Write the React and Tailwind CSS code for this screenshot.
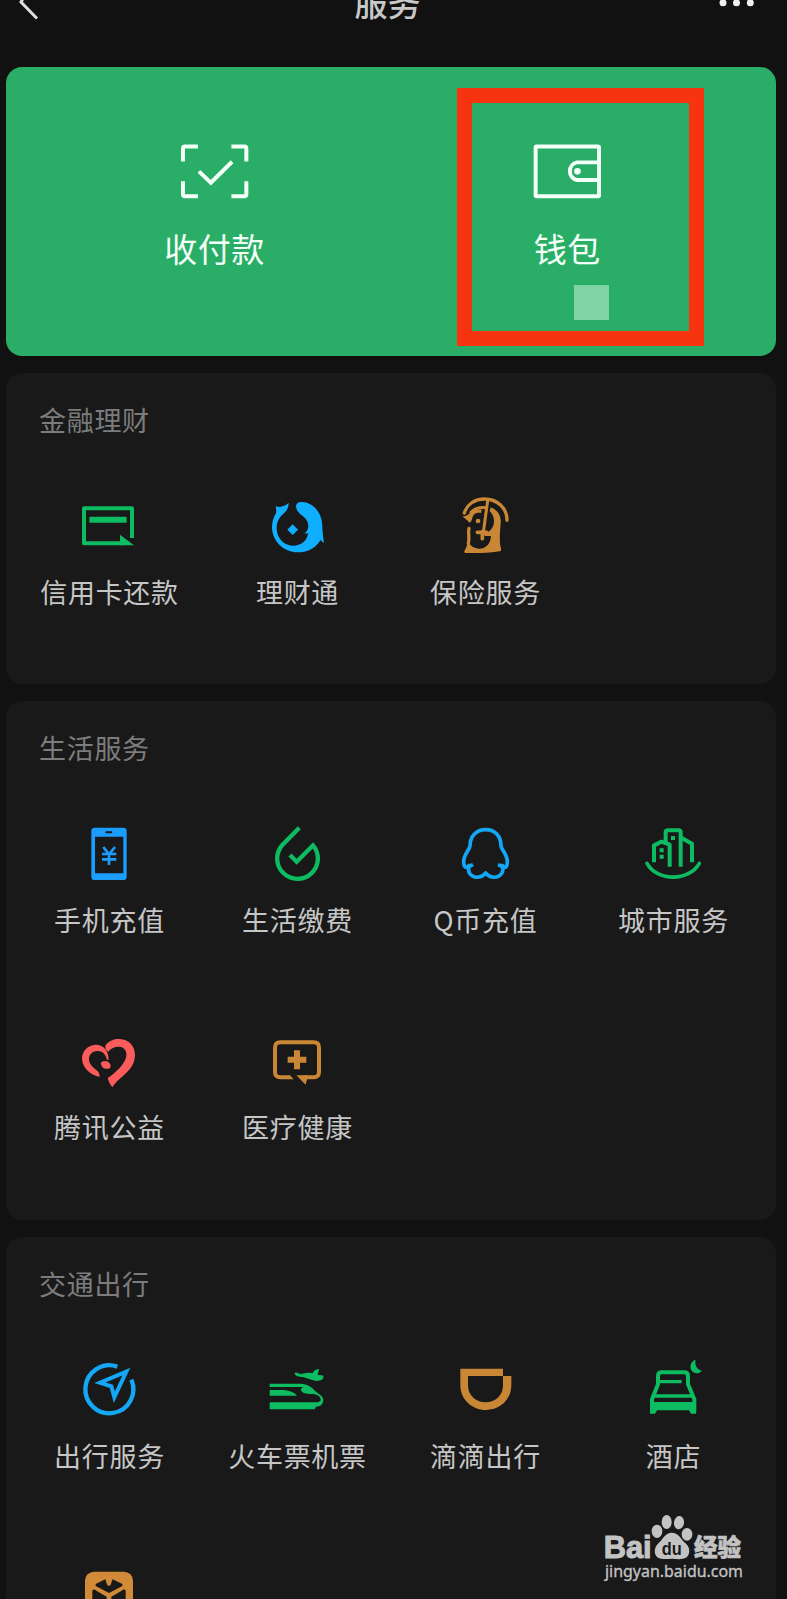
import clsx from "clsx";

const GREEN = "#0dbc60";
const BLUE = "#14a7f5";
const ORANGE = "#c98634";

function CardIcon() {
    return (
        <svg viewBox="237 408 180 180" className="size-[60px]" fill="none" stroke={GREEN} strokeWidth="12">
            <path d="M396 534V445H252V550H372" strokeLinejoin="round" />
            <path d="M268 479H380" strokeWidth="18" />
            <path d="M360 524L402 556H360Z" fill={GREEN} stroke="none" />
        </svg>
    );
}

function FishIcon() {
    return (
        <svg viewBox="81 48 180 180" className="size-[60px]" fill="#10aeff">
            <path d="M107 78C114 82 120 82 127 79C135 77 141 73 146 68C146 80 142 91 132 100C117 112 109 128 110 148C112 176 133 197 158 197C184 197 201 182 205 158C202 161 198 162 194 160C202 154 205 145 205 137C204 122 196 114 184 105C175 98 168 88 168 79C168 70 175 66 185 66C219 66 247 99 247 139C247 154 249 169 252 188C248 186 244 183 242 179C229 202 204 217 174 217C130 217 96 183 96 141C96 124 102 109 108 100C109 93 109 85 107 78Z" />
            <path d="M158 133L174 149L158 165L142 149Z" />
        </svg>
    );
}

function InsuranceIcon() {
    return (
        <svg viewBox="645 48 180 180" className="size-[60px]" fill="none" stroke={ORANGE} strokeWidth="10" strokeLinecap="round">
            <path d="M673 99C681 73 704 57 733 57C772 57 801 84 801 121" />
            <path d="M693 97C704 85 720 81 738 83" strokeWidth="9" />
            <path d="M743 62L731 150" strokeWidth="9" />
            <path d="M712 157H740M727 155V176" strokeWidth="11" />
            <path d="M687 145C683 161 690 174 685 190" strokeWidth="10" />
            <path d="M667 108C676 111 682 106 690 99C696 91 707 87 725 89L723 99C708 96 699 103 697 115C695 122 693 127 688 128C682 118 674 117 667 108Z" fill={ORANGE} stroke="none" />
            <circle cx="714" cy="123" r="7" fill={ORANGE} stroke="none" />
            <path d="M752 82C774 90 784 108 782 130C780 154 777 187 783 205L783 212C766 219 705 219 674 219L673 212C678 207 681 198 683 184C691 198 702 206 718 206C739 206 752 190 753 168H733V161C751 156 762 142 762 123C762 109 755 99 749 94Z" fill={ORANGE} stroke="none" />
        </svg>
    );
}

function PhoneIcon() {
    return (
        <svg viewBox="117 72 180 180" className="size-[60px]" fill="none" stroke="#1b9cff">
            <path fillRule="evenodd" d="M164 83H250Q260 83 260 93V230Q260 240 250 240H164Q154 240 154 230V93Q154 83 164 83ZM165 110V220H250V110Z" fill="#1b9cff" stroke="none" />
            <path d="M199 97H214" stroke="#191919" strokeWidth="6" strokeLinecap="round" />
            <path d="M190 141L207 163L225 141M207 163V195M186 162H229M186 178H229" strokeWidth="8" />
        </svg>
    );
}

function DropIcon() {
    return (
        <svg viewBox="681 72 180 180" className="size-[60px]" fill="none" stroke={GREEN} strokeWidth="13">
            <path d="M778 83L727 135A61 61 0 1 0 819 136L770 185L750 165" />
        </svg>
    );
}

function PenguinIcon() {
    return (
        <svg viewBox="105 72 180 180" className="size-[60px]" fill="none" stroke={BLUE} strokeWidth="11" strokeLinejoin="round">
            <path d="M197 89C168 89 150 109 150 138C148 151 132 162 131 184C131 202 138 207 148 196C145 203 144 211 148 219C159 236 183 236 197 219C211 236 235 236 246 219C250 211 249 203 246 196C256 207 262 202 262 184C261 162 245 151 243 138C243 109 226 89 197 89Z" />
            <path d="M147 200L159 194M247 200L234 194" />
        </svg>
    );
}

function CityIcon() {
    return (
        <svg viewBox="669 72 180 180" className="size-[60px]" fill="none" stroke={GREEN} strokeWidth="12" strokeLinejoin="round">
            <path d="M702 187V136L725 125L749 134V200" />
            <path d="M737 130V97Q737 91 744 91H775Q782 91 782 97V200" />
            <path d="M784 113L816 131V187" />
            <path d="M719 151H731M719 170H731M753 114H765" />
            <path d="M681 190C711 245 807 245 838 190" strokeLinecap="round" strokeWidth="11" />
        </svg>
    );
}

function HeartIcon() {
    return (
        <svg viewBox="237 33 180 180" className="size-[60px]" fill="#fa5b5b">
            <path d="M325 95C317 92 314 84 317 75C329 61 344 56 359 57C388 58 406 80 405 106C404 132 391 149 369 168C354 181 344 190 337 202C331 194 326 186 323 174C343 161 376 133 379 108C381 90 370 80 356 80C342 80 331 86 325 95Z" />
            <path d="M326 120C326 90 308 73 286 74C262 76 246 93 246 116C247 145 271 163 299 171C298 160 296 156 290 151C277 142 266 131 267 115C268 102 278 94 291 93C307 92 316 102 321 119Z" />
            <path d="M302 130C306 123 316 121 324 125C332 130 334 138 330 144C324 148 314 147 309 143C305 140 304 134 302 130Z" />
        </svg>
    );
}

function MedicalIcon() {
    return (
        <svg viewBox="801 33 180 180" className="size-[60px]" fill="none" stroke={ORANGE} strokeWidth="12">
            <path d="M866 172H841Q825 172 825 156V83Q825 67 841 67H941Q957 67 957 83V156Q957 172 941 172H908" />
            <path d="M891 91V148M863 119H919" strokeWidth="18" />
            <path d="M889 166H924L917 194Z M864 166H870L881 178H864Z" fill={ORANGE} stroke="none" />
        </svg>
    );
}

function CompassIcon() {
    return (
        <svg viewBox="119 60 180 180" className="size-[60px]" fill="none" stroke={BLUE} strokeWidth="13">
            <path d="M234 80A72 72 0 1 0 276 119" />
            <path d="M261 95L182 128L216 139L225 172Z" strokeWidth="12" />
        </svg>
    );
}

function TrainIcon() {
    return (
        <svg viewBox="681 60 180 180" className="size-[60px]" fill={GREEN}>
            <path d="M764 101C765 97 769 96 773 99L781 102L803 98L818 99C823 90 829 87 837 87L833 105L846 106C852 107 852 113 848 117C840 124 829 124 819 121L789 111C777 110 767 109 764 101Z" />
            <path d="M689 131H780C808 131 820 147 832 159C842 165 850 171 850 180C850 193 841 200 828 200L824 208H689V187H820C833 187 842 186 842 179C842 169 831 162 817 162C798 162 783 158 783 149C783 144 787 141 792 141H689Z" />
            <path d="M689 150H724C746 150 763 157 771 167H689Z" />
        </svg>
    );
}

function DidiIcon() {
    return (
        <svg viewBox="105 60 180 180" className="size-[60px]" fill={ORANGE}>
            <path d="M121 86H249V108H274V135C274 178 241 210 198 210C155 210 121 178 121 135ZM144 108V136C144 166 167 187 197 187C227 187 249 166 249 136V108Z" fillRule="evenodd" />
        </svg>
    );
}

function HotelIcon() {
    return (
        <svg viewBox="669 60 180 180" className="size-[60px]" fill="none" stroke={GREEN} strokeWidth="12" strokeLinejoin="round">
            <path d="M696 215V178L714 133V108Q714 97 725 97H793Q804 97 804 108V133L823 178V215" />
            <path d="M716 125H785M699 168H820" strokeWidth="10" />
            <path d="M690 186H828V221H813L807 211H711L705 221H690Z" fill={GREEN} stroke="none" />
            <path d="M827 58C823 74 830 89 846 92C837 102 824 102 816 93C807 83 811 65 827 58Z" fill={GREEN} stroke="none" />
        </svg>
    );
}

function BoxIcon() {
    return (
        <svg viewBox="237 81 180 180" className="size-[60px]" fill="#191919">
            <rect x="255" y="95" width="144" height="150" rx="27" fill="#d18b38" />
            <path d="M287 132L316 118C319 124 319 136 327 138C335 136 334 124 338 118L367 132V138L327 159L287 138Z" />
            <path d="M277 154C277 147 284 147 289 152L320 170V220H277ZM377 154C377 147 370 147 365 152L334 170V220H377Z" />
        </svg>
    );
}

const sections = [
    {
        title: "金融理财",
        height: "h-[311px]",
        items: [
            { label: "信用卡还款", icon: CardIcon },
            { label: "理财通", icon: FishIcon },
            { label: "保险服务", icon: InsuranceIcon },
        ],
    },
    {
        title: "生活服务",
        height: "h-[519px]",
        items: [
            { label: "手机充值", icon: PhoneIcon },
            { label: "生活缴费", icon: DropIcon },
            { label: "Q币充值", icon: PenguinIcon },
            { label: "城市服务", icon: CityIcon },
            { label: "腾讯公益", icon: HeartIcon },
            { label: "医疗健康", icon: MedicalIcon },
        ],
    },
    {
        title: "交通出行",
        height: "h-[519px]",
        items: [
            { label: "出行服务", icon: CompassIcon },
            { label: "火车票机票", icon: TrainIcon },
            { label: "滴滴出行", icon: DidiIcon },
            { label: "酒店", icon: HotelIcon },
            { label: "", icon: BoxIcon },
        ],
    },
];

function Header() {
    return (
        <header className="flex h-[67px] items-start justify-between pl-[19px] pr-[32px]">
            <svg viewBox="0 0 20 24" className="h-6 w-5" fill="none" stroke="#dedede" strokeWidth="3">
                <path d="M8 -8L2 2L18 18.5" />
            </svg>
            <h1 className="-mt-[18px] ml-[17px] text-[33px] font-medium leading-10 text-[#c8c8c8]">服务</h1>
            <svg viewBox="0 0 36 10" className="h-2.5 w-9" fill="#f0f0f0">
                <circle cx="4" cy="2.8" r="3.5" />
                <circle cx="17.5" cy="2.8" r="3.5" />
                <circle cx="31.3" cy="2.8" r="3.5" />
            </svg>
        </header>
    );
}

function PayCard() {
    return (
        <div className="relative flex h-[289px] rounded-2xl bg-[#2aae67] px-8 pt-[74px] text-[33px] leading-10 tracking-[0.5px] text-[#f4fff8]">
            <div className="flex flex-1 flex-col items-center gap-[27px]">
                <svg viewBox="84 63 220 180" className="h-[60px] w-[73px]" fill="none" stroke="currentColor" strokeWidth="12">
                    <path d="M99 124V85Q99 79 105 79H144M245 79H284Q290 79 290 85V124M290 184V223Q290 229 284 229H245M144 229H105Q99 229 99 223V184" />
                    <path d="M147 154L183 188L247 125" />
                </svg>
                <span>收付款</span>
            </div>
            <div className="flex flex-1 flex-col items-center gap-[27px]">
                <svg viewBox="274 213 220 180" className="h-[60px] w-[73px]" fill="none" stroke="currentColor" strokeWidth="12">
                    <rect x="288" y="229" width="191" height="150" rx="3" />
                    <path d="M479 277H413A27 27 0 0 0 413 330H479" />
                    <circle cx="414" cy="304" r="10" fill="currentColor" stroke="none" />
                </svg>
                <span>钱包</span>
            </div>
            <div className="absolute left-[568px] top-[218px] size-[35px] bg-[#7fd3a4]" />
            <div className="absolute left-[450.5px] top-[21px] h-[257.5px] w-[247px] border-[15.5px] border-[#f6340f]" />
        </div>
    );
}

function Section({ title, height, items }) {
    return (
        <section className={clsx("shrink-0 rounded-2xl bg-[#191919] pl-[9px] pt-[27px]", height)}>
            <h2 className="pl-6 text-[27px] leading-10 tracking-[0.7px] text-[#7c7c7c]">{title}</h2>
            <div className="mt-14 grid auto-rows-[207px] grid-cols-[repeat(4,188px)]">
                {items.map(({ label, icon: Icon }) => (
                    <div key={label} className="flex flex-col items-center gap-4">
                        <Icon />
                        <span className="ml-px whitespace-nowrap text-[27px] leading-10 tracking-[0.7px] text-[#c6c6c6]">{label}</span>
                    </div>
                ))}
            </div>
        </section>
    );
}

function Watermark() {
    return (
        <svg viewBox="0 0 621 327" className="absolute left-[580px] top-[1490px] h-[109px] w-[207px]" fill="#c3c3c3">
            <text x="71" y="204" fontSize="94" fontWeight="700" stroke="#c3c3c3" strokeWidth="3" textLength="144" lengthAdjust="spacingAndGlyphs" className="font-['Liberation_Sans']">Bai</text>
            <ellipse cx="231" cy="124" rx="16" ry="20" />
            <ellipse cx="260" cy="96" rx="15" ry="21" />
            <ellipse cx="297" cy="98" rx="15" ry="20" transform="rotate(8 297 98)" />
            <ellipse cx="321" cy="133" rx="16" ry="19" />
            <path d="M275 128C294 128 302 145 313 157C326 168 331 178 326 193C320 209 303 209 276 206C248 209 231 208 226 193C221 177 229 165 239 156C250 145 257 128 275 128Z" />
            <text x="245" y="194" fontSize="56" fontWeight="700" fill="#191919" textLength="60" lengthAdjust="spacingAndGlyphs" className="font-['Liberation_Sans']">du</text>
            <text x="342" y="197" fontSize="72" fontWeight="900" stroke="#c3c3c3" strokeWidth="2" textLength="141" lengthAdjust="spacingAndGlyphs" className="font-['Noto_Sans_CJK_SC']">经验</text>
            <text x="75" y="260" fontSize="49" stroke="#c3c3c3" strokeWidth="1" textLength="414" lengthAdjust="spacingAndGlyphs" className="font-['Noto_Sans']">jingyan.baidu.com</text>
        </svg>
    );
}

export default function App() {
    return (
        <div className="relative h-[1599px] w-[787px] overflow-hidden bg-[#111111] font-['Noto_Sans_CJK_SC',sans-serif]">
            <Header />
            <main className="ml-1.5 flex w-[769.5px] flex-col gap-[17px]">
                <PayCard />
                {sections.map((section) => (
                    <Section key={section.title} {...section} />
                ))}
            </main>
            <Watermark />
        </div>
    );
}
